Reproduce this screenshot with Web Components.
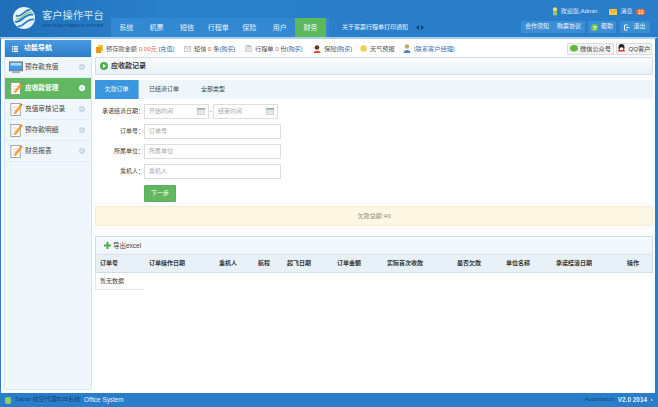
<!DOCTYPE html>
<html lang="zh">
<head>
<meta charset="utf-8">
<title>客户操作平台</title>
<style>
  html, body { margin: 0; height: 100%; overflow: hidden; }
  body {
    font: 6px/1.2 "Liberation Sans", "Noto Sans CJK SC", sans-serif;
    color: #444;
    display: flex;
    flex-direction: column;
    height: 407px;
  }
</style>
</head>
<body>
<template id="icon-ledger">
  <svg width="14" height="15" viewBox="0 0 15 15"><rect x="2" y="1" width="10" height="13" fill="#fff" stroke="#888" stroke-width=".8"/><path d="M4 5h5M4 8h5M4 11h4" stroke="#bbb" stroke-width=".7"/><path d="M6 10l6-8 2 1.500-6 8-2.500 1z" fill="#f0a030"/><path d="M12 2l2 1.500 .6-1-1.800-1.400z" fill="#d8534f"/></svg>
</template>

<app-header></app-header>
<app-body>
  <side-nav slot="side">
    <side-item icon="screen">预存款充值</side-item>
    <side-item icon="ledger" active>应收款管理</side-item>
    <side-item icon="ledger">充值审核记录</side-item>
    <side-item icon="ledger">预存款明细</side-item>
    <side-item icon="ledger">财务报表</side-item>
  </side-nav>
  <info-bar></info-bar>
  <panel-title>应收款记录</panel-title>
  <tab-bar></tab-bar>
  <search-form></search-form>
  <notice-bar>欠款总额:¥0</notice-bar>
  <order-table></order-table>
</app-body>
<app-footer></app-footer>

<script>
const ledgerIcon = () => document.getElementById('icon-ledger').innerHTML;

class AppHeader extends HTMLElement {
  constructor() {
    super();
    this.attachShadow({ mode: 'open' });
  }

  connectedCallback() {
    const tabs = ['系统', '机票', '短信', '行程单', '保险', '用户', '财务'];
    this.shadowRoot.innerHTML = `
      <style>
        :host { display: flex; height: 37px; flex: none; background: linear-gradient(90deg, #1f6fb8, #2b80cb 25%, #2a7dc8); color: #fff; }
        .logo { width: 111px; flex: none; display: flex; padding: 6px 0 0 12px; box-sizing: border-box; gap: 6px; }
        .brand b { display: block; font-weight: 400; font-size: 10.300px; line-height: 12px; margin-top: 4px; color: #d5e8f7; white-space: nowrap; }
        .brand span { display: block; font-size: 3.800px; line-height: 5px; margin-top: 2px; color: #123f70; white-space: nowrap; letter-spacing: .2px; }
        .right { flex: 1; display: flex; flex-direction: column; min-width: 0; }
        .top { height: 18px; display: flex; justify-content: flex-end; align-items: center; padding: 5px 13px 0 0; box-sizing: border-box; }
        .top span { display: flex; align-items: center; gap: 3px; color: #e4f0fa; }
        .user { margin-right: 12px; }
        .badge { background: #f0701e; color: #fff; font-size: 5px; line-height: 6px; border-radius: 3px; padding: 0 1.500px; margin-left: 1px; font-style: normal; }
        .bottom { height: 19px; display: flex; align-items: stretch; }
        .tabs { display: flex; background: #3388d2; width: 218px; font-size: 7px; }
        .tabs a { width: 30.400px; text-align: center; line-height: 19px; color: #e8f2fb; flex: none; }
        .tabs a.wide { width: 32px; }
        .tabs a.on { background: #5cb85c; color: #fff; width: 31px; }
        .news { margin-left: 13px; line-height: 19px; display: flex; gap: 8px; color: #eaf3fb; white-space: nowrap; align-items: center; }
        .arrows { display: flex; gap: 2px; }
        .buttons { margin-left: auto; display: flex; margin-right: 8px; height: 12px; margin-top: 3px; }
        .buttons a { background: #3a8ed6; display: flex; align-items: center; justify-content: center; gap: 3px; color: #eef6fc; height: 12px; }
        .b1 { width: 32px; }
        .b2 { width: 32px; margin-right: 3px; }
        .b3 { width: 28px; margin-right: 4px; }
        .b4 { width: 30px; }
      </style>
      <div class="logo">
        <svg width="24" height="24" viewBox="0 0 25 25" fill="none">
          <circle cx="12.500" cy="12.500" r="11.500" fill="#e8f5fb"/>
          <path d="M3 16C9 19 13 7 22 9" stroke="#2a7dc8" stroke-width="2.200"/>
          <path d="M4 10C10 13 13 3 19 4" stroke="#2a7dc8" stroke-width="1.800"/>
          <path d="M6 21C12 23 15 12 23 14" stroke="#2a7dc8" stroke-width="1.800"/>
          <path d="M4 13C10 16 13 5 21 6.500" stroke="#7cc576" stroke-width="1.200"/>
        </svg>
        <div class="brand"><b>客户操作平台</b><span>OFFICE AUTOMATION SYSTEM</span></div>
      </div>
      <div class="right">
        <div class="top">
          <span class="user">
            <svg width="6" height="9" viewBox="0 0 6 9"><circle cx="3" cy="2.500" r="2.200" fill="#f5d76e"/><rect x="1" y="4.500" width="4" height="4" rx="1" fill="#8fce6a"/></svg>
            欢迎您,Admin
          </span>
          <span>
            <svg width="8" height="6" viewBox="0 0 8 6"><rect width="8" height="6" fill="#f5c842"/><path d="M0 0l4 3.500L8 0" fill="none" stroke="#c98f12" stroke-width=".6"/></svg>
            消息<i class="badge">10</i>
          </span>
        </div>
        <div class="bottom">
          <nav class="tabs">${tabs.map(t => `<a class="${t === '财务' ? 'on' : t === '行程单' ? 'wide' : ''}">${t}</a>`).join('')}</nav>
          <div class="news">关于客票行程单打印通知
            <span class="arrows">
              <svg width="3" height="5" viewBox="0 0 3 5"><path d="M3 0L0 2.500 3 5z" fill="#123f70"/></svg>
              <svg width="3" height="5" viewBox="0 0 3 5"><path d="M0 0l3 2.500L0 5z" fill="#123f70"/></svg>
            </span>
          </div>
          <div class="buttons">
            <a class="b1">合作须知</a>
            <a class="b2">购票协议</a>
            <a class="b3"><svg width="7" height="7" viewBox="0 0 7 7"><circle cx="3.500" cy="3.500" r="3.500" fill="#79c34e"/><text x="3.500" y="5.700" font-size="6" font-weight="700" text-anchor="middle" fill="#fff">?</text></svg>帮助</a>
            <a class="b4"><svg width="6" height="7" viewBox="0 0 6 7" fill="none" stroke="#fff" stroke-width=".9"><path d="M3.500 1H.5v5h3M2 3.500h3.500"/></svg>退出</a>
          </div>
        </div>
      </div>`;
  }
}

class AppBody extends HTMLElement {
  constructor() {
    super();
    this.attachShadow({ mode: 'open' }).innerHTML = `
      <style>
        :host { display: flex; flex: 1; min-height: 0; background: #fff; border-left: 1px solid #2a7dc8; border-right: 3px solid #2a7dc8; border-top: 2px solid #a9cfee; padding: 1px 2px 3px 3px; gap: 3px; }
        .main { flex: 1; display: flex; flex-direction: column; min-width: 0; }
      </style>
      <slot name="side"></slot>
      <div class="main"><slot></slot></div>`;
  }
}

class SideNav extends HTMLElement {
  constructor() {
    super();
    this.attachShadow({ mode: 'open' }).innerHTML = `
      <style>
        :host { display: block; width: 88px; flex: none; background: #f0f7fc; border: 1px solid #d9e6f0; border-top: 0; box-sizing: border-box; border-radius: 0 0 2px 2px; }
        .head { height: 17px; background: linear-gradient(#4a9be2, #2d7cc8); color: #fff; display: flex; align-items: center; padding-left: 7px; gap: 6px; font-weight: 700; font-size: 7px; }
      </style>
      <div class="head">
        <svg width="6" height="6" viewBox="0 0 6 6" fill="#fff"><rect width="1.400" height="1.400"/><rect y="2.300" width="1.400" height="1.400"/><rect y="4.600" width="1.400" height="1.400"/><rect x="2" width="4" height="1.400"/><rect x="2" y="2.300" width="4" height="1.400"/><rect x="2" y="4.600" width="4" height="1.400"/></svg>
        功能导航
      </div>
      <slot></slot>`;
  }
}

class SideItem extends HTMLElement {
  constructor() {
    super();
    this.attachShadow({ mode: 'open' });
  }

  connectedCallback() {
    const screen = `<svg width="14" height="15" viewBox="0 0 15 15"><rect x=".5" y="1.500" width="14" height="9.500" fill="#3d9ae8" stroke="#777"/><rect x="1.500" y="2.500" width="12" height="3" fill="#a9d6f7"/><rect x="3.500" y="11.500" width="8" height="2" fill="#aaa"/></svg>`;
    this.shadowRoot.innerHTML = `
      <style>
        :host { display: flex; height: 21px; align-items: center; padding: 0 6px 0 4px; gap: 2px; border-bottom: 1px solid #e2edf5; box-sizing: border-box; color: #444; font-size: 6.700px; }
        :host([active]) { background: #62b862; color: #fff; border-bottom-color: #62b862; font-weight: 700; }
        .label { flex: 1; white-space: nowrap; }
        .go { width: 6px; height: 6px; border-radius: 50%; background: #c4d9e8; display: flex; align-items: center; justify-content: center; }
        :host([active]) .go { background: #fff; }
        .go i { border-left: 2px solid #fff; border-top: 1.500px solid transparent; border-bottom: 1.500px solid transparent; }
        :host([active]) .go i { border-left-color: #62b862; }
        svg { display: block; flex: none; }
      </style>
      ${this.getAttribute('icon') === 'screen' ? screen : ledgerIcon()}
      <span class="label"><slot></slot></span>
      <span class="go"><i></i></span>`;
  }
}

class InfoBar extends HTMLElement {
  constructor() {
    super();
    this.attachShadow({ mode: 'open' }).innerHTML = `
      <style>
        :host { display: flex; height: 17px; align-items: center; flex: none; white-space: nowrap; color: #555; padding-left: 1px; font-size: 6.200px; }
        .it { display: flex; align-items: center; gap: 3px; flex: none; }
        em { font-style: normal; color: #e8622c; }
        a { color: #3a6fb0; }
        .btns { margin-left: auto; display: flex; gap: 2px; margin-right: 1px; }
        .btn { display: flex; align-items: center; justify-content: center; gap: 2px; height: 12px; border: 1px solid #dcdcdc; background: #f3f3f3; box-sizing: border-box; border-radius: 1px; color: #444; }
        svg { display: block; flex: none; }
      </style>
      <span class="it" style="width:88px"><svg width="7" height="8" viewBox="0 0 7 8"><rect x="2" width="5" height="6.500" fill="#f5c030"/><rect y="2" width="5" height="6" fill="#e89a20"/></svg><span>预存款金额 <em>0.00元</em> <a>[充值]</a></span></span>
      <span class="it" style="width:61px"><svg width="7" height="6" viewBox="0 0 7 6"><rect x=".3" y=".3" width="6.400" height="5.400" fill="#eee" stroke="#bbb" stroke-width=".6"/><path d="M.3.300L3.500 3 6.700.3" fill="none" stroke="#bbb" stroke-width=".6"/></svg><span>短信 <em>0</em> 条<a>[购买]</a></span></span>
      <span class="it" style="width:68px"><svg width="7" height="7" viewBox="0 0 7 7"><rect y="1" width="7" height="6" fill="#dfe6ea" stroke="#b5c0c8" stroke-width=".6"/><rect x="2" width="3" height="2" fill="#b5c0c8"/></svg><span>行程单 <em>0</em> 份<a>[购买]</a></span></span>
      <span class="it" style="width:47px"><svg width="8" height="8" viewBox="0 0 8 8"><circle cx="4" cy="2.500" r="2.300" fill="#5a3a28"/><path d="M.5 8c0-3 7-3 7 0z" fill="#d8463a"/></svg><span>保险<a>[购买]</a></span></span>
      <span class="it" style="width:43px"><svg width="7" height="7" viewBox="0 0 7 7"><circle cx="3.500" cy="3.500" r="3.200" fill="#f7cc55"/></svg><span>天气预报</span></span>
      <span class="it"><svg width="8" height="9" viewBox="0 0 8 9"><circle cx="4" cy="2.500" r="2.200" fill="#d9a06a"/><path d="M.5 9c0-4 7-4 7 0z" fill="#4a86c5"/></svg><a>[联系客户经理]</a></span>
      <span class="btns">
        <span class="btn" style="width:47px"><svg width="8" height="7" viewBox="0 0 8 7"><ellipse cx="4" cy="3.300" rx="4" ry="3.300" fill="#5fb93a"/></svg>微信公众号</span>
        <span class="btn" style="width:36px"><svg width="9" height="9" viewBox="0 0 9 9"><ellipse cx="4.500" cy="3.600" rx="3" ry="3.500" fill="#222"/><ellipse cx="4.500" cy="5" rx="2" ry="1.800" fill="#fff"/><path d="M1.500 6l6 0 .5 1.500H1z" fill="#e33"/></svg>QQ客户</span>
      </span>`;
  }
}

class PanelTitle extends HTMLElement {
  constructor() {
    super();
    this.attachShadow({ mode: 'open' }).innerHTML = `
      <style>
        :host { display: flex; height: 18px; align-items: center; flex: none; border: 1px solid #cfdfeb; border-radius: 1px; box-sizing: border-box; background: linear-gradient(#fafcfe, #e8f1f8); padding-left: 4px; gap: 3px; font-weight: 700; color: #333; font-size: 7px; }
        svg { display: block; }
      </style>
      <svg width="8" height="8" viewBox="0 0 8 8"><circle cx="4" cy="4" r="4" fill="#4cae4c"/><path d="M3 2l3 2-3 2z" fill="#fff"/></svg>
      <slot></slot>`;
  }
}

class TabBar extends HTMLElement {
  constructor() {
    super();
    this.attachShadow({ mode: 'open' }).innerHTML = `
      <style>
        :host { display: flex; height: 19px; margin-top: 5px; flex: none; background: #eef5fb; line-height: 19px; color: #444; }
        a { text-align: center; }
        .on { width: 44px; background: #3a97df; color: #fff; border-right: 1px solid #7dbce9; box-sizing: border-box; }
      </style>
      <a class="on">欠款订单</a>
      <a style="width:50px">已结清订单</a>
      <a style="width:48px">全部类型</a>`;
  }
}

class SearchForm extends HTMLElement {
  constructor() {
    super();
    this.attachShadow({ mode: 'open' });
  }

  connectedCallback() {
    const cal = `<svg width="8" height="7" viewBox="0 0 8 7"><rect width="8" height="7" fill="#cfd8de"/><rect y="0" width="8" height="1.500" fill="#9aa9b3"/><path d="M1 3h6M1 5h6" stroke="#fff" stroke-width=".7"/></svg>`;
    const row = (label, body) => `<div class="row"><label>${label}：</label>${body}</div>`;
    const input = text => `<div class="input">${text}</div>`;
    const date = text => `<div class="input date"><span>${text}</span>${cal}</div>`;
    this.shadowRoot.innerHTML = `
      <style>
        :host { display: flex; flex-direction: column; gap: 5px; padding-top: 5px; flex: none; color: #444; }
        .row { display: flex; height: 15px; align-items: center; }
        label { width: 49px; text-align: right; flex: none; white-space: nowrap; }
        .input { width: 137px; height: 15px; border: 1px solid #ddd; box-sizing: border-box; padding: 0 4px; line-height: 13px; color: #aaa; background: #fff; }
        .date { width: 65px; display: flex; align-items: center; justify-content: space-between; padding: 0 3px 0 4px; }
        .dash { width: 4px; text-align: center; }
        button { margin-left: 49px; width: 32px; height: 17px; padding: 0; border: 1px solid #5cad5c; background: #62b862; color: #fff; font: inherit; border-radius: 1px; }
        .submit { margin-top: 1px; }
        svg { display: block; flex: none; }
      </style>
      ${row('承诺结清日期', date('开始时间') + '<span class="dash">-</span>' + date('结束时间'))}
      ${row('订单号', input('订单号'))}
      ${row('所属单位', input('所属单位'))}
      ${row('乘机人', input('乘机人'))}
      <div class="submit"><button>下一步</button></div>`;
  }
}

class NoticeBar extends HTMLElement {
  constructor() {
    super();
    this.attachShadow({ mode: 'open' }).innerHTML = `
      <style>
        :host { display: flex; height: 20px; margin-top: 4px; flex: none; align-items: center; justify-content: center; background: #fdf7e3; border: 1px solid #f8eecb; box-sizing: border-box; border-radius: 1px; color: #8a8a7a; font-size: 6.200px; }
      </style>
      <slot></slot>`;
  }
}

class OrderTable extends HTMLElement {
  constructor() {
    super();
    this.attachShadow({ mode: 'open' });
  }

  connectedCallback() {
    const cols = [
      ['订单号', 49], ['订单操作日期', 70], ['乘机人', 39], ['航程', 29], ['起飞日期', 50], ['订单金额', 50],
      ['实际首次收款', 70], ['是否欠款', 49], ['单位名称', 50], ['承诺结清日期', 71], ['操作', 30]
    ];
    this.shadowRoot.innerHTML = `
      <style>
        :host { display: block; margin-top: 10px; flex: none; }
        .tools { height: 19px; display: flex; align-items: center; gap: 2px; padding-left: 8px; background: linear-gradient(#f6fafd, #eef5fa); border: 1px solid #cfdfeb; border-bottom: 1px solid #d5e2ec; box-sizing: border-box; color: #444; font-size: 6.500px; }
        .head { display: grid; grid-template-columns: ${cols.map(c => c[1] + 'px').join(' ')}; height: 18px; align-items: center; background: #e9f1f8; border: 1px solid #cfdfeb; border-top: 0; box-sizing: border-box; font-weight: 700; color: #333; }
        .head span { padding-left: 4px; white-space: nowrap; }
        .empty { width: 49px; height: 17px; line-height: 16px; padding-left: 4px; box-sizing: border-box; border-left: 1px solid #dfe8ef; border-bottom: 1px solid #dfe8ef; color: #444; }
        svg { display: block; }
      </style>
      <div class="tools">
        <svg width="7" height="7" viewBox="0 0 7 7"><path d="M2.500 0h2v2.500H7v2H4.500V7h-2V4.500H0v-2h2.500z" fill="#4cae4c"/></svg>
        导出excel
      </div>
      <div class="head">${cols.map(c => `<span>${c[0]}</span>`).join('')}</div>
      <div class="empty">暂无数据</div>`;
  }
}

class AppFooter extends HTMLElement {
  constructor() {
    super();
    this.attachShadow({ mode: 'open' }).innerHTML = `
      <style>
        :host { display: flex; height: 14px; flex: none; align-items: center; background: #2a7dc8; color: #eaf3fb; padding: 0 5px 0 5px; white-space: nowrap; font-size: 6.400px; }
        .dark { color: #134a84; font-size: 6px; }
        .right { margin-left: auto; display: flex; gap: 3px; align-items: center; }
        b { font-weight: 700; color: #eaf3fb; }
        i { border-left: 2px solid #eaf3fb; border-top: 1.500px solid transparent; border-bottom: 1.500px solid transparent; margin-left: 1px; }
        svg { display: block; margin-right: 4px; }
      </style>
      <svg width="6" height="7" viewBox="0 0 6 7"><rect width="6" height="7" rx="2" fill="#8fce6a"/></svg>
      <span class="dark">Sapar 航空代理B2B系统</span>
      <span style="margin-left:4px">Office System</span>
      <span class="right"><span class="dark">Automation</span><b>V2.0 2014</b><i></i></span>`;
  }
}

customElements.define('app-header', AppHeader);
customElements.define('app-body', AppBody);
customElements.define('side-nav', SideNav);
customElements.define('side-item', SideItem);
customElements.define('info-bar', InfoBar);
customElements.define('panel-title', PanelTitle);
customElements.define('tab-bar', TabBar);
customElements.define('search-form', SearchForm);
customElements.define('notice-bar', NoticeBar);
customElements.define('order-table', OrderTable);
customElements.define('app-footer', AppFooter);
</script>
</body>
</html>
